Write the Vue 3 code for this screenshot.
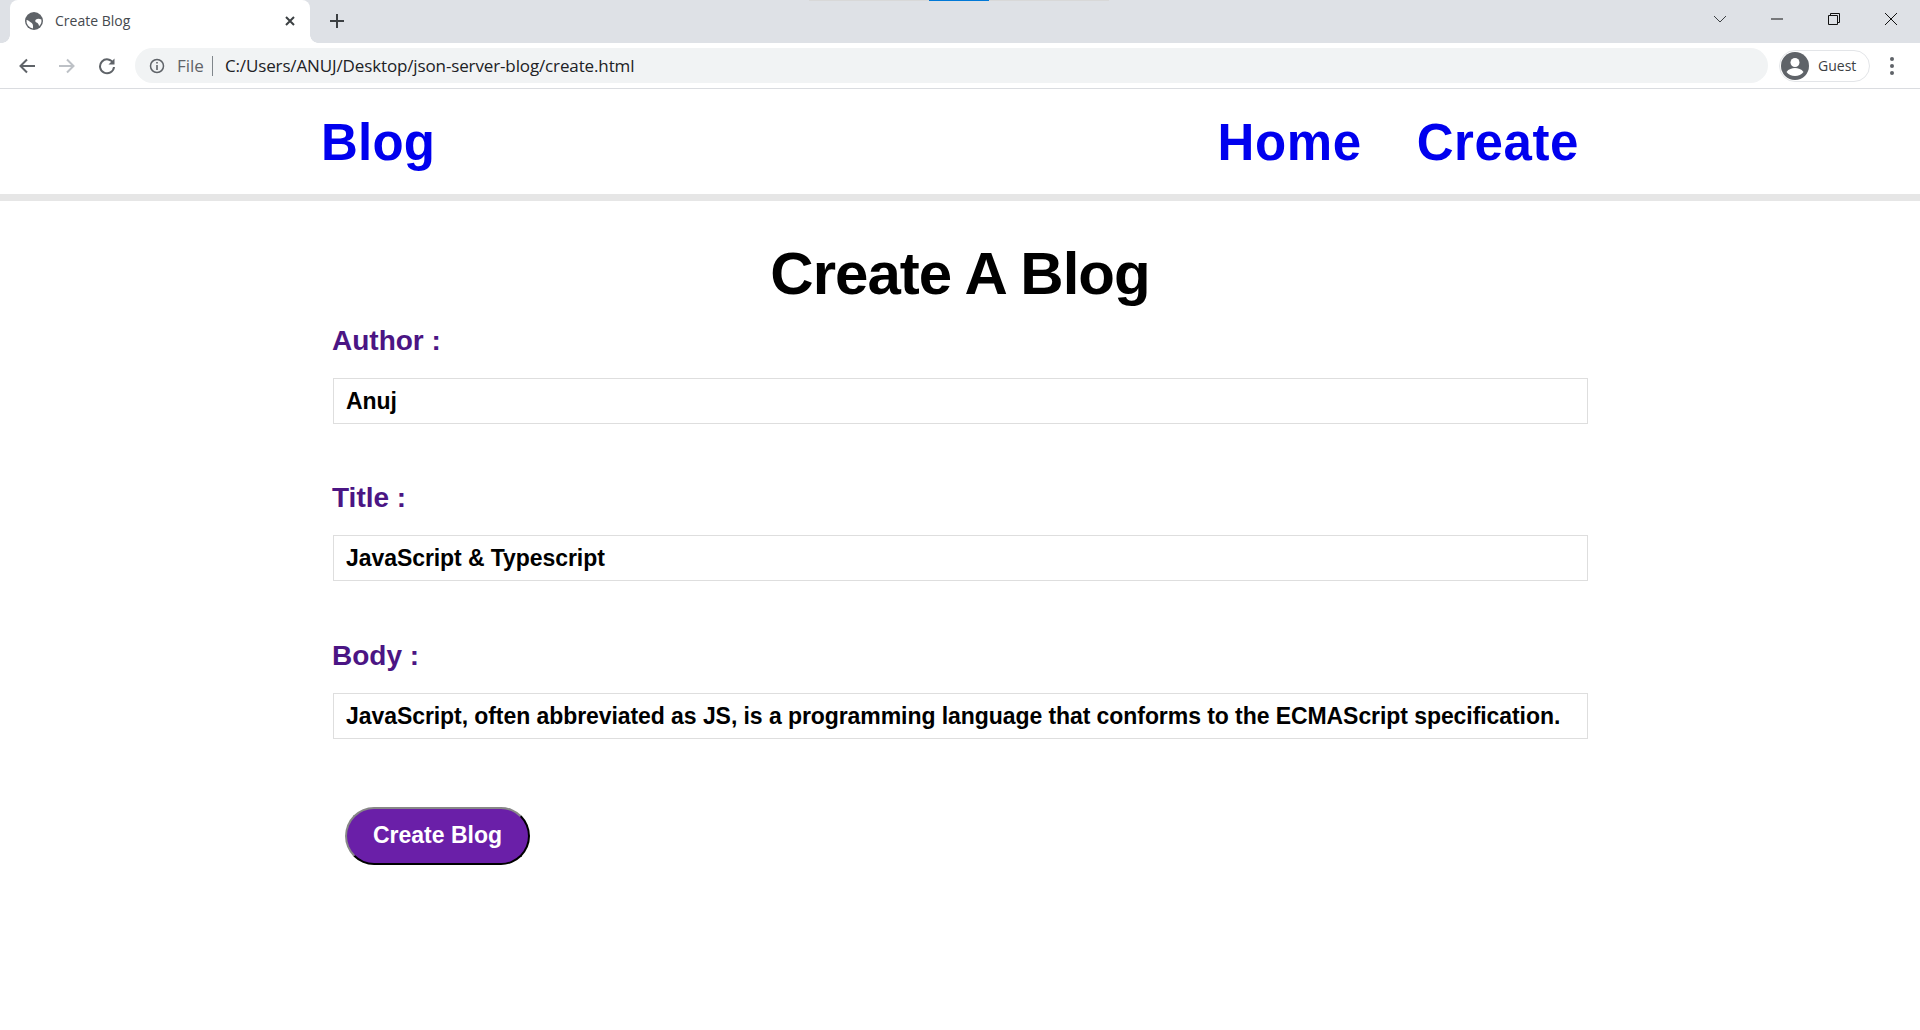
<template>
  <div class="browser">
    <div class="tabstrip">
      <div class="tab">
        <svg class="globe" width="18" height="18" viewBox="0 0 18 18">
          <circle cx="9" cy="9" r="9" fill="#5f6368"/>
          <path d="M1.500 8c2 0 3 1.500 4.500 2.500 1 .7 2 1.500 2 3.500v2.400A7.500 7.500 0 0 1 1.500 8z" fill="#fff"/>
          <path d="M16.400 7.500c-2-1-4-1-5.400 0-1.200.8-1 2.500.5 3 1.500.5 2.500 2 2.500 3.700A7.500 7.500 0 0 0 16.400 7.500z" fill="#fff"/>
        </svg>
        <span class="tab-title">Create Blog</span>
        <svg class="tab-close" width="12" height="12" viewBox="0 0 12 12">
          <path d="M2 2l8 8M10 2l-8 8" stroke="#3c4043" stroke-width="2" fill="none"/>
        </svg>
      </div>
      <svg class="new-tab" width="16" height="16" viewBox="0 0 16 16">
        <path d="M8 1v14M1 8h14" stroke="#3c4043" stroke-width="2" fill="none"/>
      </svg>
      <div class="window-btns">
        <svg width="14" height="10" viewBox="0 0 14 10"><path d="M1 2l6 6 6-6" stroke="#3c4043" fill="none"/></svg>
        <svg width="14" height="14" viewBox="0 0 14 14"><path d="M1 7h12" stroke="#111" fill="none"/></svg>
        <svg width="14" height="14" viewBox="0 0 14 14"><path d="M1.500 3.500h9v9h-9zM3.500 3.500v-2h9v9h-2" stroke="#111" fill="none"/></svg>
        <svg width="14" height="14" viewBox="0 0 14 14"><path d="M1 1l12 12M13 1L1 13" stroke="#111" fill="none"/></svg>
      </div>
      <div class="update-bar"><i></i><b></b><i></i></div>
    </div>
    <div class="toolbar">
      <svg class="nav-icon" width="18" height="18" viewBox="0 0 18 18">
        <path d="M17 9H3M9 2.500L2.500 9 9 15.500" stroke="#5f6368" stroke-width="2" fill="none"/>
      </svg>
      <svg class="nav-icon" width="18" height="18" viewBox="0 0 18 18">
        <path d="M1 9h14M9 2.500L15.500 9 9 15.500" stroke="#bdc1c6" stroke-width="2" fill="none"/>
      </svg>
      <svg class="nav-icon" width="18" height="18" viewBox="0 0 18 18">
        <path d="M15.300 6.200A7 7 0 1 0 16 10" stroke="#5f6368" stroke-width="2" fill="none"/>
        <path d="M16.500 1.500v6h-6z" fill="#5f6368"/>
      </svg>
      <div class="omnibox">
        <svg width="16" height="16" viewBox="0 0 16 16">
          <circle cx="8" cy="8" r="6.500" stroke="#5f6368" stroke-width="1.500" fill="none"/>
          <path d="M8 7v5M8 4v1.600" stroke="#5f6368" stroke-width="1.600" fill="none"/>
        </svg>
        <span class="scheme">File</span>
        <span class="divider"></span>
        <span class="url">C:/Users/ANUJ/Desktop/json-server-blog/create.html</span>
      </div>
      <div class="profile">
        <svg width="28" height="28" viewBox="0 0 28 28">
          <circle cx="14" cy="14" r="14" fill="#5f6368"/>
          <circle cx="14" cy="10.500" r="4.500" fill="#fff"/>
          <path d="M5.500 20c2-3 5.500-4 8.500-4s6.500 1 8.500 4c-2 2.500-5 4-8.500 4s-6.500-1.500-8.500-4z" fill="#fff"/>
        </svg>
        <span>Guest</span>
      </div>
      <div class="menu-dots"><i></i><i></i><i></i></div>
    </div>
    <header class="site-nav">
      <a class="nav-link" href="#">Blog</a>
      <div class="nav-right">
        <a class="nav-link" href="#">Home</a>
        <a class="nav-link" href="#">Create</a>
      </div>
    </header>
    <main class="content">
      <h1>Create A Blog</h1>
      <form class="blog-form" @submit.prevent>
        <div class="field" v-for="field in fields" :key="field.label">
          <label>{{ field.label }} :</label>
          <input type="text" :value="field.value" />
        </div>
        <button type="submit" class="submit">Create Blog</button>
      </form>
    </main>
  </div>
</template>

<script setup>
const fields = [
  { label: 'Author', value: 'Anuj' },
  { label: 'Title', value: 'JavaScript & Typescript' },
  {
    label: 'Body',
    value: 'JavaScript, often abbreviated as JS, is a programming language that conforms to the ECMAScript specification.'
  }
];
</script>

<style>
html, body {
  margin: 0;
  background: #fff;
  overflow: hidden;
}
</style>

<style scoped>
.browser {
  height: 1030px;
  font-family: "Liberation Sans", Arial, sans-serif;
}
.tabstrip {
  position: relative;
  height: 43px;
  background: #dee1e6;
  display: flex;
  align-items: center;
  padding-left: 10px;
  box-sizing: border-box;
}
.tab {
  position: relative;
  width: 300px;
  height: 43px;
  background: #fff;
  border-radius: 8px 8px 0 0;
  display: flex;
  align-items: center;
  padding: 0 14px 2px 15px;
  box-sizing: border-box;
}
.tab::before,
.tab::after {
  content: "";
  position: absolute;
  bottom: 0;
  width: 8px;
  height: 8px;
}
.tab::before {
  left: -8px;
  background: radial-gradient(circle at 0 0, #dee1e6 7.500px, #fff 8px);
}
.tab::after {
  right: -8px;
  background: radial-gradient(circle at 100% 0, #dee1e6 7.500px, #fff 8px);
}
.tab-title {
  margin-left: 12px;
  font: 14px "Open Sans", sans-serif;
  color: #45494e;
  flex: 1;
}
.new-tab {
  margin: 0 0 2px 19px;
}
.window-btns {
  margin-left: auto;
  display: flex;
  align-items: center;
  gap: 43px;
  padding-right: 22px;
  height: 37px;
  align-self: flex-start;
}
.update-bar {
  position: absolute;
  top: 0;
  left: 809px;
  display: flex;
  height: 1px;
}
.update-bar i {
  width: 120px;
  background: #d8d8d8;
}
.update-bar b {
  width: 60px;
  height: 1px;
  background: #0078d7;
}
.toolbar {
  height: 45px;
  display: flex;
  align-items: center;
  padding: 0 26px 0 18px;
  border-bottom: 1px solid #dadce0;
}
.nav-icon {
  margin-right: 22px;
  flex: none;
}
.omnibox {
  flex: 1;
  height: 35px;
  margin-left: -3px;
  background: #f1f3f4;
  border-radius: 18px;
  display: flex;
  align-items: center;
  padding-left: 14px;
  font: 17px "Open Sans", sans-serif;
}
.scheme {
  margin-left: 12px;
  color: #5f6368;
}
.divider {
  width: 1px;
  height: 20px;
  background: #80868b;
  margin: 0 12px 0 8px;
}
.url {
  color: #202124;
  letter-spacing: -0.13px;
}
.profile {
  margin-left: 11px;
  width: 91px;
  height: 32px;
  border: 1px solid #e3e5e8;
  border-radius: 17px;
  display: flex;
  align-items: center;
  padding-left: 1px;
  box-sizing: border-box;
  font: 14px "Open Sans", sans-serif;
  color: #3c4043;
  gap: 9px;
}
.menu-dots {
  margin-left: 20px;
  display: flex;
  flex-direction: column;
  gap: 3px;
}
.menu-dots i {
  width: 4px;
  height: 4px;
  border-radius: 50%;
  background: #5f6368;
}
.site-nav {
  height: 103px;
  border-bottom: 7px solid #e6e6e6;
  display: flex;
  justify-content: space-between;
  align-items: center;
  padding: 2px 341px 0 321px;
}
.nav-right {
  display: flex;
  gap: 55px;
}
.nav-link {
  font-size: 51px;
  font-weight: 700;
  color: #0000ee;
  text-decoration: none;
  letter-spacing: 0.2px;
}
.nav-right .nav-link {
  letter-spacing: 0.6px;
}
.content {
  width: 1256px;
  margin: 0 auto;
}
h1 {
  margin: 40px 0 17px;
  text-align: center;
  font-size: 60px;
  line-height: 66px;
  font-weight: 700;
  color: #000;
  letter-spacing: -1px;
}
.field {
  margin-bottom: 57.3px;
}
label {
  display: block;
  font-size: 28px;
  line-height: 34px;
  font-weight: 700;
  color: #4b1584;
  margin-bottom: 20px;
}
input {
  display: block;
  width: calc(100% - 1px);
  margin-left: 1px;
  height: 46px;
  box-sizing: border-box;
  border: 1px solid #dedede;
  padding: 1px 12px 0;
  font-family: inherit;
  font-size: 23px;
  font-weight: 700;
  letter-spacing: -0.07px;
  color: #000;
  outline: none;
}
.submit {
  margin: 11px 0 0 13px;
  width: 185px;
  height: 58px;
  background: #6a1fa8;
  color: #fff;
  border: 2px outset #333;
  border-radius: 29px;
  font-family: inherit;
  font-size: 23px;
  font-weight: 700;
}
</style>
